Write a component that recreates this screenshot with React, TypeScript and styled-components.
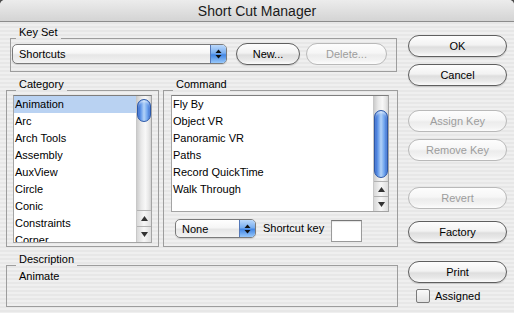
import styled, { createGlobalStyle } from 'styled-components';

const GlobalStyle = createGlobalStyle`
  html, body {
    margin: 0;
    padding: 0;
    background: #4b4b4b;
  }
  body {
    font-family: "Liberation Sans", Arial, sans-serif;
  }
  * {
    box-sizing: border-box;
  }
`;

const stripes = `repeating-linear-gradient(to bottom, #efefef 0px, #efefef 2px, #e7e7e7 2px, #e7e7e7 4px)`;

const Window = styled.div`
  width: 514px;
  height: 313px;
  background: ${stripes};
  border-radius: 5px 5px 0 0;
  overflow: hidden;
  display: flex;
  flex-direction: column;
  font-size: 11px;
  color: #000;
`;

const TitleBar = styled.div`
  height: 22px;
  flex: none;
  border-bottom: 1px solid #8c8c8c;
  background: linear-gradient(#ececec, #d4d4d4);
  display: flex;
  align-items: center;
  justify-content: center;
  font-size: 14px;
  color: #1a1a1a;
`;

const Body = styled.div`
  display: flex;
  gap: 10px;
  padding-left: 6px;
`;

const Main = styled.div`
  width: 392px;
  display: flex;
  flex-direction: column;
  padding-top: 6px;
`;

const Group = styled.div<{ $width: number; $mt?: number; $ml?: number }>`
  width: ${p => p.$width}px;
  margin-top: ${p => p.$mt ?? 0}px;
  margin-left: ${p => p.$ml ?? 0}px;
  display: flex;
  flex-direction: column;
`;

const GroupHead = styled.div`
  display: flex;
  align-items: flex-end;
  height: 11px;
`;

const HeadLine = styled.div<{ $lead?: number }>`
  height: 1px;
  background: #9d9d9d;
  flex: ${p => (p.$lead ? `0 0 ${p.$lead}px` : '1')};
`;

const GroupTitle = styled.span`
  align-self: flex-start;
  line-height: 13px;
  margin-top: -2px;
  padding: 0 3px;
  white-space: nowrap;
`;

const GroupBody = styled.div<{ $height: number; $pad: string }>`
  height: ${p => p.$height}px;
  padding: ${p => p.$pad};
  border: 1px solid #9d9d9d;
  border-top: none;
`;

const Row = styled.div`
  display: flex;
  align-items: center;
`;

const ListsRow = styled.div`
  display: flex;
  gap: 4px;
  margin-top: 8px;
`;

const ListBox = styled.div<{ $height: number }>`
  height: ${p => p.$height}px;
  display: flex;
  background: #fff;
  border: 1px solid #a4a4a4;
  border-top-color: #7e7e7e;
`;

const Items = styled.div`
  flex: 1;
  overflow: hidden;
`;

const Item = styled.div<{ $selected?: boolean }>`
  height: 17px;
  line-height: 16px;
  padding-left: 1px;
  white-space: nowrap;
  background: ${p => (p.$selected ? '#b9d2f2' : 'transparent')};
`;

const ScrollBar = styled.div`
  width: 15px;
  flex: none;
  display: flex;
  flex-direction: column;
  border-left: 1px solid #c8c8c8;
`;

const Track = styled.div`
  flex: 1;
  background: linear-gradient(to right, #cdcdcd, #e9e9e9 30%, #f8f8f8 60%, #e6e6e6 85%, #d3d3d3);
`;

const Thumb = styled.div<{ $offset: number; $size: number }>`
  margin: ${p => p.$offset}px 0 0 0;
  height: ${p => p.$size}px;
  border-radius: 7px;
  border: 1px solid #2d59a8;
  background: linear-gradient(to right, #2a5fc6, #5f95e8 22%, #b3d3f8 50%, #6fa4ee 78%, #2f66cc);
  box-shadow: inset 0 2px 2px rgba(255, 255, 255, 0.5);
`;

const ArrowBtn = styled.div<{ $h: number }>`
  height: ${p => p.$h}px;
  flex: none;
  border-top: 1px solid #b2b2b2;
  display: flex;
  align-items: center;
  justify-content: center;
  background: linear-gradient(to right, #d8d8d8, #f7f7f7 50%, #dedede);
`;

const Popup = styled.div<{ $width: number; $height: number }>`
  width: ${p => p.$width}px;
  height: ${p => p.$height}px;
  flex: none;
  display: flex;
  border: 1px solid #7a7a7a;
  border-radius: 5px;
  overflow: hidden;
  background: linear-gradient(#ffffff, #f6f6f6 45%, #e6e6e6 55%, #f3f3f3);
  box-shadow: 0 1px 1px rgba(0, 0, 0, 0.12);
`;

const PopupLabel = styled.span`
  flex: 1;
  display: flex;
  align-items: center;
  padding-left: 6px;
`;

const PopupArrows = styled.span`
  width: 16px;
  display: flex;
  align-items: center;
  justify-content: center;
  border-left: 1px solid #5478b8;
  background: linear-gradient(#bcd9fb, #79aef0 45%, #4286e4 55%, #98c8fa);
`;

const AquaButton = styled.button<{ $width: number; $ml?: number; $mt?: number }>`
  width: ${p => p.$width}px;
  height: 22px;
  flex: none;
  margin-left: ${p => p.$ml ?? 0}px;
  margin-top: ${p => p.$mt ?? 0}px;
  padding: 0;
  border-radius: 11px;
  border: 1px solid #5f5f5f;
  background: linear-gradient(#fdfdfd, #f2f2f2 45%, #dedede 55%, #e9e9e9 80%, #fbfbfb);
  box-shadow: 0 1px 1px rgba(0, 0, 0, 0.15);
  font-family: "Liberation Sans", Arial, sans-serif;
  font-size: 11px;
  color: #000;

  &:disabled {
    border-color: #b9b9b9;
    color: #9d9d9d;
    background: linear-gradient(#fdfdfd, #f6f6f6 45%, #ececec 55%, #f2f2f2 80%, #fcfcfc);
    box-shadow: none;
  }
`;

const Footer = styled.div`
  display: flex;
  align-items: flex-start;
  height: 23px;
  margin-top: 7px;
  padding-left: 4px;
`;

const FieldLabel = styled.span`
  line-height: 19px;
  margin: 0 7px 0 7px;
`;

const KeyField = styled.div`
  width: 31px;
  height: 22px;
  margin-top: 1px;
  background: #fff;
  border: 1px solid #9a9a9a;
  border-top-color: #777;
  box-shadow: inset 0 1px 1px rgba(0, 0, 0, 0.12);
`;

const DescText = styled.div`
  line-height: 13px;
`;

const Side = styled.div`
  width: 99px;
  display: flex;
  flex-direction: column;
  padding-top: 13px;
`;

const CheckRow = styled.label`
  display: flex;
  align-items: center;
  gap: 5px;
  margin: 6px 0 0 8px;
`;

const CheckBox = styled.span`
  width: 14px;
  height: 14px;
  border: 1px solid #7a7a7a;
  border-radius: 2px;
  background: linear-gradient(#fafafa, #e2e2e2);
`;

const UpDown = () => (
  <svg width="7" height="10" viewBox="0 0 7 10">
    <polygon points="0.5,4 3.5,0.5 6.5,4" fill="#111" />
    <polygon points="0.5,6 3.5,9.5 6.5,6" fill="#111" />
  </svg>
);

const Arrow = ({ down }: { down?: boolean }) => (
  <svg width="7" height="5" viewBox="0 0 7 5">
    <polygon points={down ? '0,0 7,0 3.5,5' : '0,5 7,5 3.5,0'} fill="#333" />
  </svg>
);

const Scroller = ({ offset, size, arrow }: { offset: number; size: number; arrow: number }) => (
  <ScrollBar>
    <Track>
      <Thumb $offset={offset} $size={size} />
    </Track>
    <ArrowBtn $h={arrow}>
      <Arrow />
    </ArrowBtn>
    <ArrowBtn $h={arrow}>
      <Arrow down />
    </ArrowBtn>
  </ScrollBar>
);

const categories = ['Animation', 'Arc', 'Arch Tools', 'Assembly', 'AuxView', 'Circle', 'Conic', 'Constraints', 'Corner'];
const commands = ['Fly By', 'Object VR', 'Panoramic VR', 'Paths', 'Record QuickTime', 'Walk Through'];

const App = () => {
  return (
    <>
      <GlobalStyle />
      <Window>
        <TitleBar>Short Cut Manager</TitleBar>
        <Body>
          <Main>
            <Group $width={387} $ml={4}>
              <GroupHead>
                <HeadLine $lead={6} />
                <GroupTitle>Key Set</GroupTitle>
                <HeadLine />
              </GroupHead>
              <GroupBody $height={33} $pad="4px 0 0 1px">
                <Row>
                  <Popup $width={215} $height={20}>
                    <PopupLabel>Shortcuts</PopupLabel>
                    <PopupArrows>
                      <UpDown />
                    </PopupArrows>
                  </Popup>
                  <AquaButton $width={64} $ml={9}>New...</AquaButton>
                  <AquaButton $width={81} $ml={6} disabled>Delete...</AquaButton>
                </Row>
              </GroupBody>
            </Group>

            <ListsRow>
              <Group $width={153}>
                <GroupHead>
                  <HeadLine $lead={10} />
                  <GroupTitle>Category</GroupTitle>
                  <HeadLine />
                </GroupHead>
                <GroupBody $height={156} $pad="4px 6px 3px 6px">
                  <ListBox $height={148}>
                    <Items>
                      {categories.map((c, i) => (
                        <Item key={c} $selected={i === 0}>{c}</Item>
                      ))}
                    </Items>
                    <Scroller offset={3} size={23} arrow={16} />
                  </ListBox>
                </GroupBody>
              </Group>

              <Group $width={235}>
                <GroupHead>
                  <HeadLine $lead={10} />
                  <GroupTitle>Command</GroupTitle>
                  <HeadLine />
                </GroupHead>
                <GroupBody $height={156} $pad="4px 8px 4px 7px">
                  <ListBox $height={117}>
                    <Items>
                      {commands.map(c => (
                        <Item key={c}>{c}</Item>
                      ))}
                    </Items>
                    <Scroller offset={14} size={68} arrow={15} />
                  </ListBox>
                  <Footer>
                    <Popup $width={81} $height={19}>
                      <PopupLabel>None</PopupLabel>
                      <PopupArrows>
                        <UpDown />
                      </PopupArrows>
                    </Popup>
                    <FieldLabel>Shortcut key</FieldLabel>
                    <KeyField />
                  </Footer>
                </GroupBody>
              </Group>
            </ListsRow>

            <Group $width={392} $mt={8}>
              <GroupHead>
                <HeadLine $lead={10} />
                <GroupTitle>Description</GroupTitle>
                <HeadLine />
              </GroupHead>
              <GroupBody $height={41} $pad="4px 12px">
                <DescText>Animate</DescText>
              </GroupBody>
            </Group>
          </Main>

          <Side>
            <AquaButton $width={99}>OK</AquaButton>
            <AquaButton $width={99} $mt={7}>Cancel</AquaButton>
            <AquaButton $width={99} $mt={24} disabled>Assign Key</AquaButton>
            <AquaButton $width={99} $mt={7} disabled>Remove Key</AquaButton>
            <AquaButton $width={99} $mt={26} disabled>Revert</AquaButton>
            <AquaButton $width={99} $mt={12}>Factory</AquaButton>
            <AquaButton $width={99} $mt={18}>Print</AquaButton>
            <CheckRow>
              <CheckBox />
              Assigned
            </CheckRow>
          </Side>
        </Body>
      </Window>
    </>
  );
};

export default App;
